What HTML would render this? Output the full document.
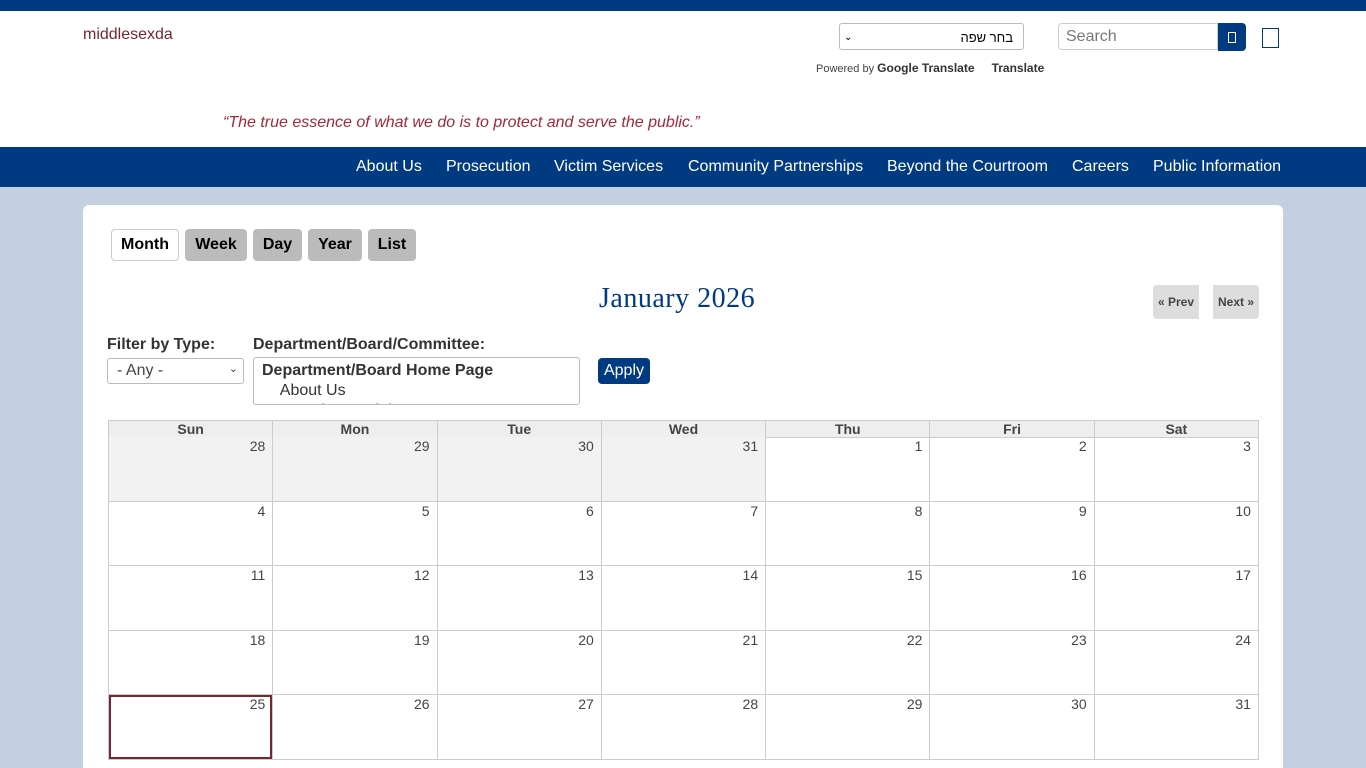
<!DOCTYPE html>
<html><head><meta charset="utf-8"><style>
html,body{margin:0;width:1366px;height:768px;overflow:hidden}
body{background:#c4cfe0;font-family:"Liberation Sans",Arial,sans-serif;position:relative}
.a{position:absolute}
.r{display:flex;height:64.6px}.r div{flex:1;border:1px solid #ccc;border-top:none;border-left:none;text-align:right;padding:1px 7px 0 0;font-size:14px;color:#444;box-sizing:border-box}.r div:first-child{border-left:1px solid #ccc}.g{background:#f2f2f2}
</style></head><body>
<div class="a" style="left:0;top:0;width:1366px;height:11px;background:#003a80"></div>
<div class="a" style="left:0;top:11px;width:1366px;height:136px;background:#fff"></div>
<div class="a" style="left:83px;top:26px;font-size:16px;color:#7a2531">middlesexda</div>
<div class="a" style="left:839px;top:23px;width:185px;height:27px;border:1px solid #bbb;border-radius:3px;font-family:'Liberation Sans','DejaVu Sans',sans-serif;font-size:13px;line-height:27px;text-align:right;box-sizing:border-box;padding-right:10px">בחר שפה<span style="position:absolute;left:4px;font-size:10px">&#8964;</span></div>
<div class="a" style="left:816px;top:61px;font-size:11px;color:#444">Powered by <b style="font-size:12px;color:#333">Google Translate</b> <b style="font-size:12px;color:#333;margin-left:14px">Translate</b></div>
<div class="a" style="left:1058px;top:23px;width:160px;height:27px;border:1px solid #ccc;border-radius:4px 0 0 4px;box-sizing:border-box;font-size:16px;color:#777;padding:4px 7px">Search</div>
<div class="a" style="left:1218px;top:23px;width:28px;height:28px;background:#003a80;border-radius:0 4px 4px 0"><div style="margin:9px 10px;width:6px;height:9px;border:1px solid #fff"></div></div>
<div class="a" style="left:1262px;top:28px;width:15px;height:18px;border:1px solid #003a80"></div>
<div class="a" style="left:223px;top:114px;font-size:16px;font-style:italic;color:#a3283a">“The true essence of what we do is to protect and serve the public.”</div>
<div class="a" style="left:0;top:147px;width:1366px;height:40px;background:#003a80;color:#fff;font-size:16px;line-height:40px">
<span class="a" style="left:356px">About Us</span><span class="a" style="left:446px">Prosecution</span><span class="a" style="left:554px">Victim Services</span><span class="a" style="left:688px">Community Partnerships</span><span class="a" style="left:887px">Beyond the Courtroom</span><span class="a" style="left:1072px">Careers</span><span class="a" style="left:1153px">Public Information</span></div>
<div class="a" style="left:83px;top:205px;width:1200px;height:570px;background:#fff;border-radius:6px"></div>
<div class="a" style="left:111px;top:229px;width:66px;height:30px;border:1px solid #ccc;border-radius:4px;font-weight:bold;font-size:16px;line-height:30px;text-align:center">Month</div>
<div class="a" style="left:185px;top:229px;width:62px;height:32px;background:#bbb;border-radius:4px;font-weight:bold;font-size:16px;line-height:32px;text-align:center">Week</div>
<div class="a" style="left:253px;top:229px;width:49px;height:32px;background:#bbb;border-radius:4px;font-weight:bold;font-size:16px;line-height:32px;text-align:center">Day</div>
<div class="a" style="left:308px;top:229px;width:54px;height:32px;background:#bbb;border-radius:4px;font-weight:bold;font-size:16px;line-height:32px;text-align:center">Year</div>
<div class="a" style="left:368px;top:229px;width:48px;height:32px;background:#bbb;border-radius:4px;font-weight:bold;font-size:16px;line-height:32px;text-align:center">List</div>
<div class="a" style="left:599px;top:283px;font-family:'Liberation Serif',serif;font-size:28px;letter-spacing:0.5px;color:#003a80">January 2026</div>
<div class="a" style="left:1153px;top:285px;width:46px;height:34px;background:#ddd;border-radius:4px 0 0 4px;font-size:12px;font-weight:bold;color:#444;line-height:34px;text-align:center">« Prev</div>
<div class="a" style="left:1213px;top:285px;width:46px;height:34px;background:#ddd;border-radius:0 4px 4px 0;font-size:12px;font-weight:bold;color:#444;line-height:34px;text-align:center">Next »</div>
<div class="a" style="left:107px;top:336px;font-size:16px;font-weight:bold;color:#333">Filter by Type:</div>
<div class="a" style="left:253px;top:336px;font-size:16px;font-weight:bold;color:#333">Department/Board/Committee:</div>
<div class="a" style="left:107px;top:358px;width:137px;height:26px;border:1px solid #bbb;border-radius:3px;box-sizing:border-box;font-size:16px;color:#444;padding:3px 9px">- Any -<span style="position:absolute;right:5px;font-size:11px">&#8964;</span></div>
<div class="a" style="left:253px;top:357px;width:327px;height:48px;border:1px solid #bbb;border-radius:3px;box-sizing:border-box;overflow:hidden;font-size:16px;color:#333;padding:3px 8px;line-height:20px"><b>Department/Board Home Page</b><br>&nbsp;&nbsp;&nbsp;&nbsp;About Us<br>&nbsp;&nbsp;&nbsp;&nbsp;Awards &amp; Training P</div>
<div class="a" style="left:598px;top:358px;width:52px;height:26px;background:#003a80;border-radius:4px;color:#fff;font-size:16px;line-height:26px;text-align:center">Apply</div>
<table class="a" style="left:108px;top:420px;width:1151px;border-collapse:collapse;font-size:14px;color:#444;table-layout:fixed">
<tr style="height:17px;background:#eee;font-weight:bold;text-align:center"><td style="border:1px solid #ccc;padding:0">Sun</td><td style="border:1px solid #ccc;padding:0">Mon</td><td style="border:1px solid #ccc;padding:0">Tue</td><td style="border:1px solid #ccc;padding:0">Wed</td><td style="border:1px solid #ccc;padding:0">Thu</td><td style="border:1px solid #ccc;padding:0">Fri</td><td style="border:1px solid #ccc;padding:0">Sat</td></tr>
</table>
<div class="a" style="left:108px;top:437px;width:1151px">
<div class="r"><div class="g">28</div><div class="g">29</div><div class="g">30</div><div class="g">31</div><div>1</div><div>2</div><div>3</div></div>
<div class="r"><div>4</div><div>5</div><div>6</div><div>7</div><div>8</div><div>9</div><div>10</div></div>
<div class="r"><div>11</div><div>12</div><div>13</div><div>14</div><div>15</div><div>16</div><div>17</div></div>
<div class="r"><div>18</div><div>19</div><div>20</div><div>21</div><div>22</div><div>23</div><div>24</div></div>
<div class="r"><div style="box-shadow:inset 0 0 0 2px #7a2531">25</div><div>26</div><div>27</div><div>28</div><div>29</div><div>30</div><div>31</div></div>
</div>
</body></html>
